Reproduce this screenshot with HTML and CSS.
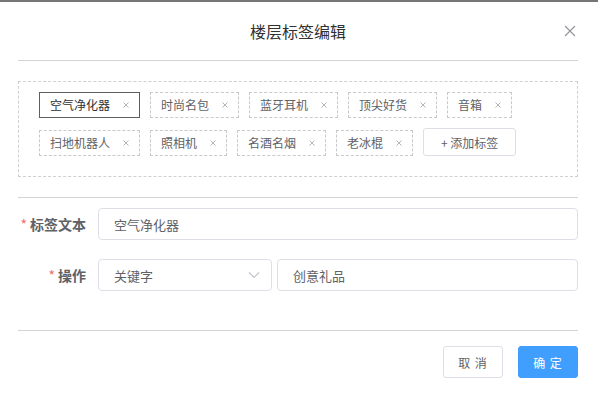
FILE: index.html
```html
<!DOCTYPE html>
<html lang="zh">
<head>
<meta charset="utf-8">
<link rel="stylesheet" href="styles.css">
</head>
<body>
<div class="topbar"></div>
<div class="dialog">
  <div class="header">
    <span class="title">楼层标签编辑</span>
    <svg class="close" width="12" height="12" viewBox="0 0 12 12"><path d="M1 1L11 11M11 1L1 11" stroke="#909399" stroke-width="1.1" fill="none"/></svg>
  </div>
  <div class="divider"></div>
  <div class="tagbox">
    <div class="tag active"><span>空气净化器</span><i class="x"><svg width="8" height="8" viewBox="0 0 8 8"><path d="M1.5 1.5L6.5 6.5M6.5 1.5L1.5 6.5" stroke="#b4b6bb" stroke-width="1" fill="none"/></svg></i></div>
    <div class="tag"><span>时尚名包</span><i class="x"><svg width="8" height="8" viewBox="0 0 8 8"><path d="M1.5 1.5L6.5 6.5M6.5 1.5L1.5 6.5" stroke="#b4b6bb" stroke-width="1" fill="none"/></svg></i></div>
    <div class="tag"><span>蓝牙耳机</span><i class="x"><svg width="8" height="8" viewBox="0 0 8 8"><path d="M1.5 1.5L6.5 6.5M6.5 1.5L1.5 6.5" stroke="#b4b6bb" stroke-width="1" fill="none"/></svg></i></div>
    <div class="tag"><span>顶尖好货</span><i class="x"><svg width="8" height="8" viewBox="0 0 8 8"><path d="M1.5 1.5L6.5 6.5M6.5 1.5L1.5 6.5" stroke="#b4b6bb" stroke-width="1" fill="none"/></svg></i></div>
    <div class="tag"><span>音箱</span><i class="x"><svg width="8" height="8" viewBox="0 0 8 8"><path d="M1.5 1.5L6.5 6.5M6.5 1.5L1.5 6.5" stroke="#b4b6bb" stroke-width="1" fill="none"/></svg></i></div>
    <div class="tag"><span>扫地机器人</span><i class="x"><svg width="8" height="8" viewBox="0 0 8 8"><path d="M1.5 1.5L6.5 6.5M6.5 1.5L1.5 6.5" stroke="#b4b6bb" stroke-width="1" fill="none"/></svg></i></div>
    <div class="tag"><span>照相机</span><i class="x"><svg width="8" height="8" viewBox="0 0 8 8"><path d="M1.5 1.5L6.5 6.5M6.5 1.5L1.5 6.5" stroke="#b4b6bb" stroke-width="1" fill="none"/></svg></i></div>
    <div class="tag"><span>名酒名烟</span><i class="x"><svg width="8" height="8" viewBox="0 0 8 8"><path d="M1.5 1.5L6.5 6.5M6.5 1.5L1.5 6.5" stroke="#b4b6bb" stroke-width="1" fill="none"/></svg></i></div>
    <div class="tag"><span>老冰棍</span><i class="x"><svg width="8" height="8" viewBox="0 0 8 8"><path d="M1.5 1.5L6.5 6.5M6.5 1.5L1.5 6.5" stroke="#b4b6bb" stroke-width="1" fill="none"/></svg></i></div>
    <button class="addbtn">+ 添加标签</button>
  </div>
  <div class="divider second"></div>
  <div class="form">
    <div class="row">
      <label class="label"><span class="star">*</span>标签文本</label>
      <div class="input full">空气净化器</div>
    </div>
    <div class="row">
      <label class="label"><span class="star">*</span>操作</label>
      <div class="controls">
        <div class="input select"><span>关键字</span>
          <svg width="12" height="8" viewBox="0 0 12 8"><path d="M1 1.5L6 6.5L11 1.5" stroke="#c0c4cc" stroke-width="1.1" fill="none"/></svg>
        </div>
        <div class="input grow">创意礼品</div>
      </div>
    </div>
  </div>
  <div class="divider third"></div>
  <div class="footer">
    <button class="btn">取 消</button>
    <button class="btn primary">确 定</button>
  </div>
</div>
</body>
</html>
```

FILE: styles.css
```css
* { box-sizing: border-box; }
html, body { margin: 0; padding: 0; background: #fff; }
body {
  width: 598px;
  height: 397px;
  overflow: hidden;
  font-family: "Noto Sans CJK SC", "Noto Sans", sans-serif;
  color: #606266;
}
.topbar { height: 2px; background: #767676; }
.dialog { padding: 0 20px 0 18px; }
.header {
  height: 58px;
  display: flex;
  align-items: center;
  justify-content: center;
  position: relative;
}
.title { font-size: 16px; color: #303133; line-height: 20px; }
.close { position: absolute; right: 2px; top: 23px; }
.divider { height: 1px; background: #d4d4d4; }
.tagbox {
  margin-top: 20px;
  border: 1px dashed #d0d0d0;
  padding: 10px 20px 20px 20px;
  display: flex;
  flex-wrap: wrap;
  align-items: flex-end;
  column-gap: 10px;
  row-gap: 10px;
  height: 96px;
}
.tag {
  height: 26px;
  display: flex;
  align-items: center;
  border: 1px dashed #c8c9cc;
  padding: 0 5px 0 10px;
  font-size: 12px;
  color: #606266;
  line-height: 1;
}
.tag.active { border: 1px solid #5e5e5e; color: #303133; }
.x {
  width: 16px;
  height: 16px;
  margin-left: 8px;
  display: flex;
  align-items: center;
  justify-content: center;
}
.addbtn {
  height: 28px;
  width: 93px;
  border: 1px solid #dcdfe6;
  border-radius: 3px;
  background: #fff;
  font-family: inherit;
  font-size: 12px;
  color: #606266;
  padding: 0;
}
.divider.second { margin-top: 20px; }
.form { padding-top: 10px; }
.row { display: flex; align-items: center; height: 32px; margin-bottom: 19px; }
.row:last-child { margin-bottom: 0; }
.label {
  width: 80px;
  padding-right: 12px;
  text-align: right;
  font-size: 14px;
  font-weight: bold;
  color: #606266;
  flex: none;
}
.star { color: #f56c6c; font-weight: normal; margin-right: 3px; }
.input {
  height: 32px;
  border: 1px solid #dcdfe6;
  border-radius: 4px;
  padding: 0 15px;
  font-size: 13px;
  color: #606266;
  display: flex;
  align-items: center;
}
.full { flex: 1; }
.controls { flex: 1; display: flex; gap: 5px; }
.select { width: 174px; justify-content: space-between; padding-right: 11px; }
.grow { flex: 1; }
.divider.third { margin-top: 39px; }
.footer {
  display: flex;
  justify-content: flex-end;
  gap: 15px;
  padding-top: 15px;
}
.btn {
  width: 60px;
  height: 32px;
  border: 1px solid #dcdfe6;
  border-radius: 3px;
  background: #fff;
  font-family: inherit;
  font-size: 12px;
  color: #606266;
  padding: 0;
  letter-spacing: 1px;
}
.btn.primary { background: #409eff; border-color: #409eff; color: #fff; }
```
